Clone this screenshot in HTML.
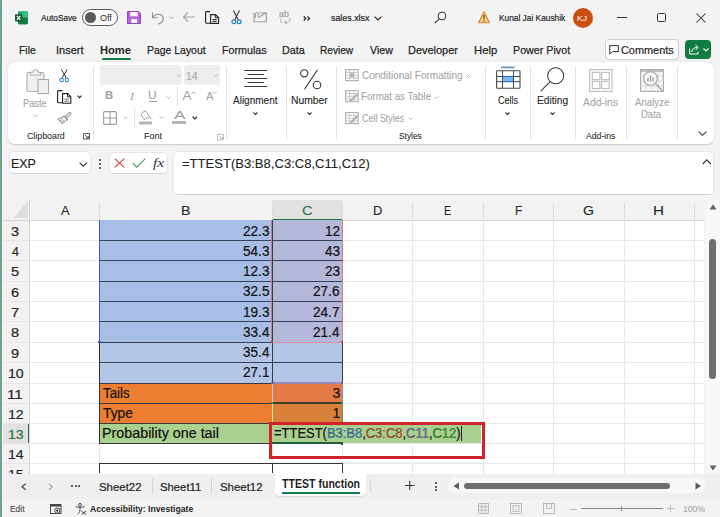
<!DOCTYPE html><html><head><meta charset='utf-8'><style>html,body{margin:0;padding:0;}body{width:720px;height:517px;position:relative;overflow:hidden;background:#f3f3f3;font-family:"Liberation Sans",sans-serif;}svg{overflow:visible}</style></head><body>
<div style='position:absolute;left:0px;top:0px;width:2px;height:517px;background:#6aa589;'></div>
<div style='position:absolute;left:1.5px;top:0px;width:0.8px;height:517px;background:#3f7f5f;'></div>
<div style='position:absolute;left:2.3px;top:0px;width:1px;height:517px;background:#fbfbfb;'></div>
<svg style='position:absolute;left:15px;top:10.8px;' width='13' height='13.5' viewBox='0 0 13 13.5'>
<rect x='3' y='0.3' width='9.8' height='12.9' rx='1.1' fill='#21a366'/>
<rect x='7.5' y='0.3' width='5.3' height='6.5' rx='0.8' fill='#33c481'/>
<rect x='3' y='6.6' width='9.8' height='6.6' rx='0.8' fill='#107c41'/>
<rect x='0' y='3.2' width='7.3' height='7.3' rx='0.9' fill='#185c37'/>
<path d='M1.9 4.9 L5.4 8.8 M5.4 4.9 L1.9 8.8' stroke='#fff' stroke-width='1.2'/>
</svg>
<div style='position:absolute;left:41.00px;top:13.8px;white-space:pre;font-family:"Liberation Sans",sans-serif;font-size:9px;font-weight:400;font-style:normal;line-height:1;color:#262626;transform:scaleX(0.9128);transform-origin:0 0;-webkit-text-stroke:0.2px #262626;'>AutoSave</div>
<div style='position:absolute;left:82px;top:9px;width:34px;height:15px;border:1px solid #5a5a5a;border-radius:9px;background:#fbfbfb'></div>
<div style='position:absolute;left:85px;top:12px;width:11px;height:11px;border-radius:50%;background:#5b5b5b'></div>
<div style='position:absolute;left:100.00px;top:14px;white-space:pre;font-family:"Liberation Sans",sans-serif;font-size:9px;font-weight:400;font-style:normal;line-height:1;color:#333;'>Off</div>
<svg style='position:absolute;left:127.2px;top:10.8px;' width='14' height='13' viewBox='0 0 14 13'>
<path d='M0 1 A1 1 0 0 1 1 0 H11.5 L13.9 2.4 V12 A1 1 0 0 1 12.9 13 H1 A1 1 0 0 1 0 12 Z' fill='#b563d8'/>
<rect x='3.2' y='0.9' width='7.6' height='4.4' fill='#fbf5fd'/>
<rect x='4.2' y='8.1' width='6' height='3.9' fill='#fbf5fd'/>
<path d='M0.5 1 V12.5 H13.4 V2.6 L11.3 0.5 H1 Z' fill='none' stroke='#9440b8' stroke-width='0.9'/>
</svg>
<svg style='position:absolute;left:151px;top:11px;' width='14' height='14' viewBox='0 0 14 14'>
<path d='M2 6.5 C4 2 11.5 2 12.3 7 C12.8 10 10 12.5 7 13.3' fill='none' stroke='#8c8c8c' stroke-width='1.1'/>
<path d='M1.5 1.5 V6.8 H6.5' fill='none' stroke='#8c8c8c' stroke-width='1.1'/>
</svg>
<svg style='position:absolute;left:169px;top:16px;' width='5' height='4' viewBox='0 0 5 4'><path d='M0.5 0.8 L2.5 2.8 L4.5 0.8' fill='none' stroke='#9a9a9a' stroke-width='0.9'/></svg>
<svg style='position:absolute;left:182px;top:11px;' width='14' height='12' viewBox='0 0 14 12'><path d='M13 6 H1.5 M6 1.5 L1.5 6 L6 10.5' fill='none' stroke='#a8a8a8' stroke-width='1.1'/></svg>
<svg style='position:absolute;left:205px;top:11px;' width='15' height='13' viewBox='0 0 15 13'>
<path d='M5.5 12.3 H1.5 A1 1 0 0 1 0.6 11.3 V1.6 A1 1 0 0 1 1.6 0.6 H5' fill='none' stroke='#222' stroke-width='1.1'/>
<path d='M5.6 3.6 H10.5 L13.6 6.6 V12.4 H5.6 Z' fill='none' stroke='#222' stroke-width='1.1'/>
<path d='M10.3 3.6 V6.8 H13.6 M7.5 8.6 H11.6 M7.5 10.4 H11.6' fill='none' stroke='#222' stroke-width='1'/>
</svg>
<svg style='position:absolute;left:231px;top:10px;' width='11' height='15' viewBox='0 0 11 15'>
<path d='M2.5 0.5 L7.3 10 M8.5 0.5 L3.7 10' stroke='#333' stroke-width='1.1' fill='none'/>
<circle cx='2.8' cy='11.8' r='1.9' fill='none' stroke='#2e7fc2' stroke-width='1.2'/>
<circle cx='8.2' cy='11.8' r='1.9' fill='none' stroke='#2e7fc2' stroke-width='1.2'/>
</svg>
<svg style='position:absolute;left:252.5px;top:10.5px;' width='15' height='12' viewBox='0 0 15 12'>
<path d='M1 1.5 V10.8 H13.3 V2 H6' fill='none' stroke='#9a9a9a' stroke-width='1.1'/>
<path d='M2.5 7 V2.2 A1.5 1.5 0 0 1 5.2 2.2 V6.3' fill='none' stroke='#9a9a9a' stroke-width='1'/>
<path d='M5.5 6.5 L13 1.8' stroke='#9a9a9a' stroke-width='1.1'/>
</svg>
<div style='position:absolute;left:279.00px;top:10px;white-space:pre;font-family:"Liberation Sans",sans-serif;font-size:8.5px;font-weight:400;font-style:normal;line-height:1;color:#a0a0a0;transform:scaleX(1.0333);transform-origin:0 0;-webkit-text-stroke:0.2px #a0a0a0;'>ab</div>
<svg style='position:absolute;left:278.5px;top:17px;' width='12' height='7' viewBox='0 0 12 7'><path d='M3.2 1 C1 1.5 1 5 3.2 5.8 M11 1 C11 4.5 8.5 6 6 5.5 M6.5 3.5 L5.5 5.5 L7.8 6.5' fill='none' stroke='#a8a8a8' stroke-width='1'/></svg>
<svg style='position:absolute;left:303px;top:16px;' width='8' height='5' viewBox='0 0 8 5'><path d='M0.7 0.5 L2.8 2.5 L0.7 4.5 M4.5 0.5 L6.6 2.5 L4.5 4.5' fill='none' stroke='#222' stroke-width='1.2'/></svg>
<div style='position:absolute;left:331.20px;top:13.2px;white-space:pre;font-family:"Liberation Sans",sans-serif;font-size:9.5px;font-weight:400;font-style:normal;line-height:1;color:#262626;transform:scaleX(0.9341);transform-origin:0 0;-webkit-text-stroke:0.2px #262626;'>sales.xlsx</div>
<svg style='position:absolute;left:373.5px;top:15.5px;' width='8' height='5' viewBox='0 0 8 5'><path d='M0.6 0.6 L4 4 L7.4 0.6' fill='none' stroke='#222' stroke-width='1.1'/></svg>
<svg style='position:absolute;left:434px;top:10.5px;' width='13' height='13' viewBox='0 0 13 13'><circle cx='8' cy='5' r='3.9' fill='none' stroke='#333' stroke-width='1'/><path d='M5.2 7.8 L0.9 12.2' stroke='#333' stroke-width='1.1'/></svg>
<svg style='position:absolute;left:477.5px;top:11px;' width='12' height='12.5' viewBox='0 0 12 12.5'><path d='M6 0.8 L11.4 11.8 H0.6 Z' fill='#f8cd85' stroke='#d4882e' stroke-width='1.1' stroke-linejoin='round'/><path d='M6 4 V8.3' stroke='#4a3000' stroke-width='1.1'/><circle cx='6' cy='10' r='0.65' fill='#4a3000'/></svg>
<div style='position:absolute;left:498.67px;top:13.8px;white-space:pre;font-family:"Liberation Sans",sans-serif;font-size:9px;font-weight:400;font-style:normal;line-height:1;color:#262626;transform:scaleX(0.9257);transform-origin:0 0;-webkit-text-stroke:0.2px #262626;'>Kunal Jai Kaushik</div>
<div style='position:absolute;left:572.5px;top:7.5px;width:20.5px;height:20.5px;border-radius:50%;background:#ca5010'></div>
<div style='position:absolute;left:576.94px;top:14.8px;white-space:pre;font-family:"Liberation Sans",sans-serif;font-size:8px;font-weight:400;font-style:normal;line-height:1;color:#fff;transform:scaleX(1.0625);transform-origin:0 0;'>KJ</div>
<div style='position:absolute;left:617px;top:17px;width:10px;height:1px;background:#333;'></div>
<div style='position:absolute;left:656.5px;top:12.5px;width:7.5px;height:7.5px;border:1px solid #333;border-radius:1.5px'></div>
<svg style='position:absolute;left:695.5px;top:12.5px;' width='10' height='10' viewBox='0 0 10 10'><path d='M0.5 0.5 L9.5 9.5 M9.5 0.5 L0.5 9.5' stroke='#333' stroke-width='1.05'/></svg>
<div style='position:absolute;left:18.62px;top:45.2px;white-space:pre;font-family:"Liberation Sans",sans-serif;font-size:11.8px;font-weight:400;font-style:normal;line-height:1;color:#262626;transform:scaleX(0.8833);transform-origin:0 0;-webkit-text-stroke:0.25px #262626;'>File</div>
<div style='position:absolute;left:56.07px;top:45.2px;white-space:pre;font-family:"Liberation Sans",sans-serif;font-size:11.8px;font-weight:400;font-style:normal;line-height:1;color:#262626;transform:scaleX(0.9310);transform-origin:0 0;-webkit-text-stroke:0.25px #262626;'>Insert</div>
<div style='position:absolute;left:146.62px;top:45.2px;white-space:pre;font-family:"Liberation Sans",sans-serif;font-size:11.8px;font-weight:400;font-style:normal;line-height:1;color:#262626;transform:scaleX(0.8846);transform-origin:0 0;-webkit-text-stroke:0.25px #262626;'>Page Layout</div>
<div style='position:absolute;left:221.59px;top:45.2px;white-space:pre;font-family:"Liberation Sans",sans-serif;font-size:11.8px;font-weight:400;font-style:normal;line-height:1;color:#262626;transform:scaleX(0.9062);transform-origin:0 0;-webkit-text-stroke:0.25px #262626;'>Formulas</div>
<div style='position:absolute;left:281.58px;top:45.2px;white-space:pre;font-family:"Liberation Sans",sans-serif;font-size:11.8px;font-weight:400;font-style:normal;line-height:1;color:#262626;transform:scaleX(0.9167);transform-origin:0 0;-webkit-text-stroke:0.25px #262626;'>Data</div>
<div style='position:absolute;left:319.64px;top:45.2px;white-space:pre;font-family:"Liberation Sans",sans-serif;font-size:11.8px;font-weight:400;font-style:normal;line-height:1;color:#262626;transform:scaleX(0.8553);transform-origin:0 0;-webkit-text-stroke:0.25px #262626;'>Review</div>
<div style='position:absolute;left:369.50px;top:45.2px;white-space:pre;font-family:"Liberation Sans",sans-serif;font-size:11.8px;font-weight:400;font-style:normal;line-height:1;color:#262626;transform:scaleX(0.9000);transform-origin:0 0;-webkit-text-stroke:0.25px #262626;'>View</div>
<div style='position:absolute;left:407.82px;top:45.2px;white-space:pre;font-family:"Liberation Sans",sans-serif;font-size:11.8px;font-weight:400;font-style:normal;line-height:1;color:#262626;transform:scaleX(0.9292);transform-origin:0 0;-webkit-text-stroke:0.25px #262626;'>Developer</div>
<div style='position:absolute;left:474.04px;top:45.2px;white-space:pre;font-family:"Liberation Sans",sans-serif;font-size:11.8px;font-weight:400;font-style:normal;line-height:1;color:#262626;transform:scaleX(0.9565);transform-origin:0 0;-webkit-text-stroke:0.25px #262626;'>Help</div>
<div style='position:absolute;left:512.84px;top:45.2px;white-space:pre;font-family:"Liberation Sans",sans-serif;font-size:11.8px;font-weight:400;font-style:normal;line-height:1;color:#262626;transform:scaleX(0.9073);transform-origin:0 0;-webkit-text-stroke:0.25px #262626;'>Power Pivot</div>
<div style='position:absolute;left:99.55px;top:45.2px;white-space:pre;font-family:"Liberation Sans",sans-serif;font-size:11.8px;font-weight:700;font-style:normal;line-height:1;color:#262626;transform:scaleX(0.9453);transform-origin:0 0;'>Home</div>
<div style='position:absolute;left:101.5px;top:57.5px;width:29.5px;height:2px;border-radius:1px;background:#117a43'></div>
<div style='position:absolute;left:604.5px;top:39px;width:72px;height:18.5px;border:1px solid #cdcdcd;border-radius:4px;background:#fdfdfd'></div>
<svg style='position:absolute;left:608.5px;top:44.5px;' width='10' height='9.5' viewBox='0 0 10 9.5'><path d='M0.6 0.6 H9.4 V6.6 H3.6 L0.8 9 V0.6 Z' fill='none' stroke='#333' stroke-width='1'/></svg>
<div style='position:absolute;left:620.81px;top:44.9px;white-space:pre;font-family:"Liberation Sans",sans-serif;font-size:11px;font-weight:400;font-style:normal;line-height:1;color:#262626;transform:scaleX(0.9904);transform-origin:0 0;-webkit-text-stroke:0.2px #262626;'>Comments</div>
<div style='position:absolute;left:685px;top:39.5px;width:25.5px;height:19.5px;border-radius:4px;background:#107c41'></div>
<svg style='position:absolute;left:688.5px;top:43.5px;' width='11' height='11' viewBox='0 0 11 11'><path d='M0.7 4.5 V10 H9 V7.5' fill='none' stroke='#fff' stroke-width='1'/><path d='M2.8 8 C3 5 5 3.5 8 3.5 M6.5 1 L9.3 3.5 L6.5 6' fill='none' stroke='#fff' stroke-width='1'/></svg>
<svg style='position:absolute;left:702.5px;top:48px;' width='6' height='4' viewBox='0 0 6 4'><path d='M0.5 0.5 L3 3 L5.5 0.5' fill='none' stroke='#fff' stroke-width='1.1'/></svg>
<div style='position:absolute;left:8px;top:62px;width:705.5px;height:82px;background:#fff;border-radius:7px;box-shadow:0 0.5px 1.5px rgba(0,0,0,0.18)'></div>
<div style='position:absolute;left:92.8px;top:66px;width:1px;height:73px;background:#e3e3e3;'></div>
<div style='position:absolute;left:226.3px;top:66px;width:1px;height:73px;background:#e3e3e3;'></div>
<div style='position:absolute;left:285.5px;top:66px;width:1px;height:73px;background:#e3e3e3;'></div>
<div style='position:absolute;left:335.5px;top:66px;width:1px;height:73px;background:#e3e3e3;'></div>
<div style='position:absolute;left:485.3px;top:66px;width:1px;height:73px;background:#e3e3e3;'></div>
<div style='position:absolute;left:530.4px;top:66px;width:1px;height:73px;background:#e3e3e3;'></div>
<div style='position:absolute;left:574.8px;top:66px;width:1px;height:73px;background:#e3e3e3;'></div>
<div style='position:absolute;left:626px;top:66px;width:1px;height:73px;background:#e3e3e3;'></div>
<div style='position:absolute;left:677px;top:66px;width:1px;height:73px;background:#e3e3e3;'></div>
<svg style='position:absolute;left:25.5px;top:69px;' width='24' height='26' viewBox='0 0 24 26'>
<rect x='1' y='3.5' width='17' height='19' rx='1.2' fill='#f0f0f0' stroke='#b0b0b0' stroke-width='1.1'/>
<path d='M4.5 6 V3.3 H7 A2.5 2.5 0 0 1 12 3.3 H14.5 V6 Z' fill='#f5f5f5' stroke='#b0b0b0' stroke-width='1.1'/>
<rect x='12' y='10.5' width='10.5' height='14' fill='#f0f0f0' stroke='#a8a8a8' stroke-width='1.1'/>
</svg>
<div style='position:absolute;left:23.07px;top:98.7px;white-space:pre;font-family:"Liberation Sans",sans-serif;font-size:10px;font-weight:400;font-style:normal;line-height:1;color:#a6a6a6;transform:scaleX(0.9292);transform-origin:0 0;-webkit-text-stroke:0.1px #a6a6a6;'>Paste</div>
<svg style='position:absolute;left:33px;top:114px;' width='5' height='4' viewBox='0 0 5 4'><path d='M0.5 0.8 L2.5 2.8 L4.5 0.8' fill='none' stroke='#a8a8a8' stroke-width='0.9'/></svg>
<svg style='position:absolute;left:58.5px;top:68.5px;' width='10.5' height='13.5' viewBox='0 0 10.5 13.5'>
<path d='M2.3 0.3 L7.2 8.8 M8.2 0.3 L3.3 8.8' stroke='#333' stroke-width='1' fill='none'/>
<circle cx='2.6' cy='10.9' r='1.75' fill='none' stroke='#3a8bc8' stroke-width='1.1'/>
<circle cx='7.9' cy='10.9' r='1.75' fill='none' stroke='#3a8bc8' stroke-width='1.1'/>
</svg>
<svg style='position:absolute;left:56.5px;top:89.5px;' width='15' height='14' viewBox='0 0 15 14'>
<path d='M5.5 12.8 H1.6 A1 1 0 0 1 0.6 11.8 V1.6 A1 1 0 0 1 1.6 0.6 H5.5' fill='none' stroke='#222' stroke-width='1.1'/>
<path d='M5.6 3.6 H10.7 L13.8 6.7 V13.2 H5.6 Z' fill='none' stroke='#222' stroke-width='1.1'/>
<path d='M10.5 3.6 V6.9 H13.8' fill='none' stroke='#222' stroke-width='1'/><path d='M7.6 9.2 H11.8 M7.6 11.3 H11.8' fill='none' stroke='#333' stroke-width='0.75'/>
</svg>
<svg style='position:absolute;left:76.5px;top:95px;' width='5' height='4' viewBox='0 0 5 4'><path d='M0.6 0.6 L2.5 2.6 L4.4 0.6' fill='none' stroke='#222' stroke-width='1.1'/></svg>
<svg style='position:absolute;left:57px;top:110.5px;' width='14' height='13' viewBox='0 0 14 13'>
<path d='M9.3 4.7 L12.3 1.4 A1.1 1.1 0 0 1 13.8 2.9 L10.6 6' fill='none' stroke='#9a9a9a' stroke-width='1.1'/>
<path d='M7.2 4.6 L11 8.4' stroke='#9a9a9a' stroke-width='1.8'/>
<path d='M7 5.2 L1 8.2 L5 12.5 L10.3 8.6 Z' fill='#f2f2f2' stroke='#9a9a9a' stroke-width='1.05' stroke-linejoin='round'/>
<path d='M3.2 9.8 L5.5 7.8 M4.6 11.2 L7 9' stroke='#9a9a9a' stroke-width='0.9'/>
</svg>
<div style='position:absolute;left:27.00px;top:131.6px;white-space:pre;font-family:"Liberation Sans",sans-serif;font-size:9px;font-weight:400;font-style:normal;line-height:1;color:#262626;transform:scaleX(0.9789);transform-origin:0 0;-webkit-text-stroke:0.05px #262626;'>Clipboard</div>
<svg style='position:absolute;left:83px;top:133px;' width='7' height='6.5' viewBox='0 0 7 6.5'><path d='M0.5 0.5 H6.5 V6 H0.5 Z' fill='none' stroke='#444' stroke-width='0.9'/><path d='M2 2 L5.3 5 M5.3 2.8 V5 H3' fill='none' stroke='#444' stroke-width='0.9'/></svg>
<div style='position:absolute;left:100.2px;top:65px;width:82.3px;height:19.5px;border-radius:3.5px;background:#ededed'></div>
<div style='position:absolute;left:184.4px;top:65px;width:35.4px;height:19.5px;border-radius:3.5px;background:#ededed'></div>
<svg style='position:absolute;left:175.5px;top:73.5px;' width='5' height='3' viewBox='0 0 5 3'><path d='M0.5 0.5 L2.5 2.5 L4.5 0.5' fill='none' stroke='#aaa' stroke-width='0.8'/></svg>
<svg style='position:absolute;left:212.5px;top:73.5px;' width='5' height='3' viewBox='0 0 5 3'><path d='M0.5 0.5 L2.5 2.5 L4.5 0.5' fill='none' stroke='#aaa' stroke-width='0.8'/></svg>
<div style='position:absolute;left:185.95px;top:71.5px;white-space:pre;font-family:"Liberation Sans",sans-serif;font-size:10px;font-weight:400;font-style:normal;line-height:1;color:#b0b0b0;transform:scaleX(1.0500);transform-origin:0 0;-webkit-text-stroke:0.2px #b0b0b0;'>14</div>
<div style='position:absolute;left:105.47px;top:91.4px;white-space:pre;font-family:"Liberation Sans",sans-serif;font-size:10px;font-weight:700;font-style:normal;line-height:1;color:#9d9d9d;transform:scaleX(1.1333);transform-origin:0 0;'>B</div>
<div style='position:absolute;left:129.50px;top:91.5px;white-space:pre;font-family:"Liberation Serif",serif;font-size:10.5px;font-weight:400;font-style:italic;line-height:1;color:#9d9d9d;transform:scaleX(1.1250);transform-origin:0 0;'>I</div>
<div style='position:absolute;left:147.60px;top:91px;white-space:pre;font-family:"Liberation Sans",sans-serif;font-size:10px;font-weight:400;font-style:normal;line-height:1;color:#9d9d9d;transform:scaleX(1.2000);transform-origin:0 0;'>U</div>
<div style='position:absolute;left:148.5px;top:100.8px;width:8px;height:1px;background:#9d9d9d;'></div>
<svg style='position:absolute;left:166px;top:95.5px;' width='5' height='3' viewBox='0 0 5 3'><path d='M0.5 0.5 L2.5 2.5 L4.5 0.5' fill='none' stroke='#aaa' stroke-width='0.8'/></svg>
<div style='position:absolute;left:176.7px;top:86.5px;width:1px;height:19px;background:#e0e0e0;'></div>
<div style='position:absolute;left:182.50px;top:89.3px;white-space:pre;font-family:"Liberation Sans",sans-serif;font-size:13.5px;font-weight:400;font-style:normal;line-height:1;color:#a0a0a0;'>A</div>
<svg style='position:absolute;left:191px;top:91px;' width='5' height='3.5' viewBox='0 0 5 3.5'><path d='M0.5 3 L2.5 0.8 L4.5 3' fill='none' stroke='#9d9d9d' stroke-width='0.8'/></svg>
<div style='position:absolute;left:205.50px;top:91.3px;white-space:pre;font-family:"Liberation Sans",sans-serif;font-size:10.5px;font-weight:400;font-style:normal;line-height:1;color:#a0a0a0;transform:scaleX(1.0714);transform-origin:0 0;'>A</div>
<svg style='position:absolute;left:212px;top:91px;' width='5' height='3.5' viewBox='0 0 5 3.5'><path d='M0.5 0.5 L2.5 2.7 L4.5 0.5' fill='none' stroke='#9d9d9d' stroke-width='0.8'/></svg>
<svg style='position:absolute;left:102.5px;top:110.5px;' width='14' height='14' viewBox='0 0 14 14'><rect x='0.6' y='0.6' width='12.8' height='12.8' rx='1' fill='none' stroke='#9d9d9d' stroke-width='1.1'/><path d='M7 0.6 V13.4 M0.6 7 H13.4' stroke='#9d9d9d' stroke-width='1.1'/></svg>
<svg style='position:absolute;left:123px;top:116px;' width='5' height='3' viewBox='0 0 5 3'><path d='M0.5 0.5 L2.5 2.5 L4.5 0.5' fill='none' stroke='#aaa' stroke-width='0.8'/></svg>
<div style='position:absolute;left:133.5px;top:108px;width:1px;height:20px;background:#e0e0e0;'></div>
<svg style='position:absolute;left:139px;top:110px;' width='13.5' height='15' viewBox='0 0 13.5 15'><path d='M3.5 2.5 L6.5 0.8 L10.5 6.5 L5.5 9.5 L2 5 Z' fill='none' stroke='#9d9d9d' stroke-width='1'/><path d='M11.5 6.5 C12.5 8 12.8 9 11.8 9.3 C10.8 9 11 8 11.5 6.5 Z' fill='#9d9d9d'/><rect x='0' y='11.5' width='13' height='3' fill='#b5b5b5'/></svg>
<svg style='position:absolute;left:159px;top:116px;' width='5' height='3' viewBox='0 0 5 3'><path d='M0.5 0.5 L2.5 2.5 L4.5 0.5' fill='none' stroke='#aaa' stroke-width='0.8'/></svg>
<div style='position:absolute;left:173.50px;top:110.4px;white-space:pre;font-family:"Liberation Sans",sans-serif;font-size:11px;font-weight:400;font-style:normal;line-height:1;color:#a0a0a0;transform:scaleX(1.5714);transform-origin:0 0;'>A</div>
<div style='position:absolute;left:172.4px;top:121px;width:13.6px;height:2.8px;background:#b5b5b5;'></div>
<svg style='position:absolute;left:192px;top:115.5px;' width='5.5' height='4' viewBox='0 0 5.5 4'><path d='M0.6 0.6 L2.75 2.8 L4.9 0.6' fill='none' stroke='#222' stroke-width='1.2'/></svg>
<div style='position:absolute;left:143.61px;top:131.8px;white-space:pre;font-family:"Liberation Sans",sans-serif;font-size:9px;font-weight:400;font-style:normal;line-height:1;color:#262626;transform:scaleX(0.9941);transform-origin:0 0;-webkit-text-stroke:0.05px #262626;'>Font</div>
<svg style='position:absolute;left:216.5px;top:133.5px;' width='7' height='6.5' viewBox='0 0 7 6.5'><path d='M0.5 0.5 H6.5 V6 H0.5 Z' fill='none' stroke='#b8b8b8' stroke-width='0.9'/><path d='M2 2 L5.3 5 M5.3 2.8 V5 H3' fill='none' stroke='#b8b8b8' stroke-width='0.9'/></svg>
<svg style='position:absolute;left:243.5px;top:69px;' width='24' height='18.5' viewBox='0 0 24 18.5'><path d='M0.3 1.5 H23 M3.5 5.5 H19.8 M0.3 9.5 H23 M3.5 13.5 H19.8 M0.3 17.5 H23' stroke='#3a3a3a' stroke-width='1'/></svg>
<div style='position:absolute;left:233.00px;top:95.7px;white-space:pre;font-family:"Liberation Sans",sans-serif;font-size:10px;font-weight:400;font-style:normal;line-height:1;color:#262626;-webkit-text-stroke:0.1px #262626;'>Alignment</div>
<svg style='position:absolute;left:253px;top:111.5px;' width='5' height='3.5' viewBox='0 0 5 3.5'><path d='M0.5 0.5 L2.5 2.5 L4.5 0.5' fill='none' stroke='#333' stroke-width='1.1'/></svg>
<svg style='position:absolute;left:299.5px;top:68.5px;' width='22' height='21' viewBox='0 0 22 21'><circle cx='4.3' cy='4.3' r='3.6' fill='none' stroke='#333' stroke-width='1.1'/><circle cx='17' cy='16' r='3.8' fill='none' stroke='#333' stroke-width='1.1'/><path d='M17.5 0.8 L4.5 20.3' stroke='#333' stroke-width='1.1'/></svg>
<div style='position:absolute;left:291.47px;top:95.7px;white-space:pre;font-family:"Liberation Sans",sans-serif;font-size:10px;font-weight:400;font-style:normal;line-height:1;color:#262626;transform:scaleX(1.0294);transform-origin:0 0;-webkit-text-stroke:0.1px #262626;'>Number</div>
<svg style='position:absolute;left:307px;top:111.5px;' width='5' height='3.5' viewBox='0 0 5 3.5'><path d='M0.5 0.5 L2.5 2.5 L4.5 0.5' fill='none' stroke='#333' stroke-width='1.1'/></svg>
<svg style='position:absolute;left:345px;top:68.5px;' width='14' height='12.5' viewBox='0 0 14 12.5'><rect x='0.6' y='0.6' width='12.6' height='11' fill='none' stroke='#b0b0b0' stroke-width='1.1'/><path d='M0.6 3.5 H13.2 M0.6 6.3 H13.2 M0.6 9 H13.2 M4.6 0.6 V11.6 M9 0.6 V11.6' stroke='#c4c4c4' stroke-width='0.9'/><rect x='5' y='4' width='4' height='4.5' fill='#b8b8b8'/></svg>
<svg style='position:absolute;left:345px;top:89.8px;' width='14' height='12.5' viewBox='0 0 14 12.5'><rect x='0.6' y='0.6' width='12.6' height='11' fill='none' stroke='#b0b0b0' stroke-width='1.1'/><path d='M0.6 3.5 H13.2 M0.6 6.3 H13.2 M0.6 9 H13.2 M4.6 0.6 V11.6 M9 0.6 V11.6' stroke='#c4c4c4' stroke-width='0.9'/><path d='M5 11.5 L12.5 4' stroke='#b0b0b0' stroke-width='2'/></svg>
<svg style='position:absolute;left:345px;top:111.5px;' width='14' height='12.5' viewBox='0 0 14 12.5'><rect x='0.6' y='0.6' width='12.6' height='11' fill='none' stroke='#b0b0b0' stroke-width='1.1'/><path d='M0.6 3.5 H13.2 M0.6 6.3 H13.2 M0.6 9 H13.2 M4.6 0.6 V11.6 M9 0.6 V11.6' stroke='#c4c4c4' stroke-width='0.9'/><path d='M5 11.5 L12.5 4' stroke='#b0b0b0' stroke-width='2'/></svg>
<div style='position:absolute;left:362.00px;top:71px;white-space:pre;font-family:"Liberation Sans",sans-serif;font-size:10px;font-weight:400;font-style:normal;line-height:1;color:#a6a6a6;-webkit-text-stroke:0.1px #a6a6a6;'>Conditional Formatting</div>
<svg style='position:absolute;left:466px;top:74.5px;' width='5' height='3' viewBox='0 0 5 3'><path d='M0.5 0.5 L2.5 2.5 L4.5 0.5' fill='none' stroke='#aaa' stroke-width='0.9'/></svg>
<div style='position:absolute;left:361.02px;top:92px;white-space:pre;font-family:"Liberation Sans",sans-serif;font-size:10px;font-weight:400;font-style:normal;line-height:1;color:#a6a6a6;transform:scaleX(0.9771);transform-origin:0 0;-webkit-text-stroke:0.1px #a6a6a6;'>Format as Table</div>
<svg style='position:absolute;left:433.5px;top:95.5px;' width='5' height='3' viewBox='0 0 5 3'><path d='M0.5 0.5 L2.5 2.5 L4.5 0.5' fill='none' stroke='#aaa' stroke-width='0.9'/></svg>
<div style='position:absolute;left:362.00px;top:113.5px;white-space:pre;font-family:"Liberation Sans",sans-serif;font-size:10px;font-weight:400;font-style:normal;line-height:1;color:#a6a6a6;transform:scaleX(0.8936);transform-origin:0 0;-webkit-text-stroke:0.1px #a6a6a6;'>Cell Styles</div>
<svg style='position:absolute;left:407.5px;top:117px;' width='5' height='3' viewBox='0 0 5 3'><path d='M0.5 0.5 L2.5 2.5 L4.5 0.5' fill='none' stroke='#aaa' stroke-width='0.9'/></svg>
<div style='position:absolute;left:398.67px;top:132px;white-space:pre;font-family:"Liberation Sans",sans-serif;font-size:9px;font-weight:400;font-style:normal;line-height:1;color:#262626;transform:scaleX(0.9304);transform-origin:0 0;-webkit-text-stroke:0.05px #262626;'>Styles</div>
<svg style='position:absolute;left:496px;top:65.5px;' width='25' height='23' viewBox='0 0 25 23'>
<path d='M5 1.4 H18.7' stroke='#6a9ec0' stroke-width='1.8'/>
<rect x='0.6' y='4.8' width='23.4' height='17.4' rx='0.8' fill='#fff' stroke='#4a4a4a' stroke-width='1.1'/>
<rect x='6.5' y='10.5' width='11' height='5.2' fill='#7db8f0' stroke='#1a6fc0' stroke-width='1.1'/>
<path d='M0.6 10.5 H6.5 M17.5 10.5 H24 M0.6 15.7 H6.5 M17.5 15.7 H24 M6.5 4.8 V22.2 M17.5 4.8 V22.2' stroke='#4a4a4a' stroke-width='1'/>
</svg>
<div style='position:absolute;left:498.00px;top:95.7px;white-space:pre;font-family:"Liberation Sans",sans-serif;font-size:10px;font-weight:400;font-style:normal;line-height:1;color:#262626;transform:scaleX(0.9000);transform-origin:0 0;-webkit-text-stroke:0.1px #262626;'>Cells</div>
<svg style='position:absolute;left:505px;top:111.5px;' width='5' height='3.5' viewBox='0 0 5 3.5'><path d='M0.5 0.5 L2.5 2.5 L4.5 0.5' fill='none' stroke='#333' stroke-width='1.1'/></svg>
<svg style='position:absolute;left:539.5px;top:67px;' width='26' height='25' viewBox='0 0 26 25'><circle cx='15.7' cy='8.8' r='8' fill='none' stroke='#3a3a3a' stroke-width='1.05'/><path d='M10 14.6 L0.8 24.2' stroke='#3a3a3a' stroke-width='1.1'/></svg>
<div style='position:absolute;left:536.58px;top:95.7px;white-space:pre;font-family:"Liberation Sans",sans-serif;font-size:10px;font-weight:400;font-style:normal;line-height:1;color:#262626;transform:scaleX(1.0207);transform-origin:0 0;-webkit-text-stroke:0.1px #262626;'>Editing</div>
<svg style='position:absolute;left:550px;top:111.5px;' width='5' height='3.5' viewBox='0 0 5 3.5'><path d='M0.5 0.5 L2.5 2.5 L4.5 0.5' fill='none' stroke='#333' stroke-width='1.1'/></svg>
<svg style='position:absolute;left:589px;top:69px;' width='23.5' height='23' viewBox='0 0 23.5 23'>
<rect x='0.6' y='0.6' width='22.3' height='21.8' fill='none' stroke='#bdbdbd' stroke-width='1.1'/>
<rect x='3.3' y='3.3' width='7.6' height='7.4' fill='none' stroke='#bdbdbd' stroke-width='1.1'/>
<rect x='12.6' y='3.3' width='7.6' height='7.4' fill='none' stroke='#bdbdbd' stroke-width='1.1'/>
<rect x='3.3' y='12.3' width='7.6' height='7.4' fill='none' stroke='#bdbdbd' stroke-width='1.1'/>
<rect x='12.6' y='12.3' width='7.6' height='7.4' fill='none' stroke='#bdbdbd' stroke-width='1.1'/>
</svg>
<div style='position:absolute;left:582.70px;top:97.6px;white-space:pre;font-family:"Liberation Sans",sans-serif;font-size:10px;font-weight:400;font-style:normal;line-height:1;color:#a6a6a6;transform:scaleX(1.0324);transform-origin:0 0;-webkit-text-stroke:0.1px #a6a6a6;'>Add-ins</div>
<div style='position:absolute;left:585.60px;top:132px;white-space:pre;font-family:"Liberation Sans",sans-serif;font-size:9px;font-weight:400;font-style:normal;line-height:1;color:#262626;transform:scaleX(0.9633);transform-origin:0 0;-webkit-text-stroke:0.05px #262626;'>Add-ins</div>
<svg style='position:absolute;left:640px;top:69px;' width='24' height='23' viewBox='0 0 24 23'>
<rect x='0.6' y='0.6' width='22.8' height='21.8' fill='#f6f6f6' stroke='#a8a8a8' stroke-width='1.1'/>
<rect x='0.6' y='0.6' width='22.8' height='2.2' fill='#b8b8b8'/>
<path d='M0.6 7 H23.4 M0.6 12 H23.4 M0.6 17 H23.4 M6 2.8 V22.4 M12 2.8 V22.4 M18 2.8 V22.4' stroke='#d6d6d6' stroke-width='0.8'/>
<circle cx='10.5' cy='9.5' r='6.8' fill='#fbfbfb' stroke='#a0a0a0' stroke-width='1.1'/>
<path d='M8 12.5 V9 M10.5 12.5 V6.5 M13 12.5 V8.5' stroke='#a0a0a0' stroke-width='1.4'/>
<path d='M15.5 14.5 L22.5 21.8' stroke='#a0a0a0' stroke-width='1.3'/>
</svg>
<div style='position:absolute;left:635.00px;top:97.6px;white-space:pre;font-family:"Liberation Sans",sans-serif;font-size:10px;font-weight:400;font-style:normal;line-height:1;color:#a6a6a6;transform:scaleX(0.9629);transform-origin:0 0;-webkit-text-stroke:0.1px #a6a6a6;'>Analyze</div>
<div style='position:absolute;left:641.05px;top:110.2px;white-space:pre;font-family:"Liberation Sans",sans-serif;font-size:10px;font-weight:400;font-style:normal;line-height:1;color:#a6a6a6;transform:scaleX(0.9500);transform-origin:0 0;-webkit-text-stroke:0.1px #a6a6a6;'>Data</div>
<svg style='position:absolute;left:698px;top:131px;' width='9' height='5' viewBox='0 0 9 5'><path d='M0.6 0.6 L4.5 4.3 L8.4 0.6' fill='none' stroke='#333' stroke-width='1.1'/></svg>
<div style='position:absolute;left:8.8px;top:151.4px;width:82.5px;height:23px;box-sizing:border-box;border:1px solid #e6e6e6;border-bottom-color:#d2d2d2;border-radius:5px;background:#fff'></div>
<div style='position:absolute;left:11.45px;top:157px;white-space:pre;font-family:"Liberation Sans",sans-serif;font-size:13px;font-weight:400;font-style:normal;line-height:1;color:#1f1f1f;transform:scaleX(0.9542);transform-origin:0 0;-webkit-text-stroke:0.2px #1f1f1f;'>EXP</div>
<svg style='position:absolute;left:79px;top:162px;' width='8.5' height='5' viewBox='0 0 8.5 5'><path d='M0.6 0.6 L4.25 4.2 L7.9 0.6' fill='none' stroke='#333' stroke-width='1.1'/></svg>
<div style='position:absolute;left:98.9px;top:158.5px;width:2.2px;height:2.2px;border-radius:50%;background:#333'></div>
<div style='position:absolute;left:98.9px;top:162.5px;width:2.2px;height:2.2px;border-radius:50%;background:#333'></div>
<div style='position:absolute;left:98.9px;top:166.5px;width:2.2px;height:2.2px;border-radius:50%;background:#333'></div>
<div style='position:absolute;left:108.8px;top:151.5px;width:59.5px;height:22.8px;box-sizing:border-box;border:1px solid #e6e6e6;border-bottom-color:#d2d2d2;border-radius:5px;background:#fff'></div>
<svg style='position:absolute;left:113.5px;top:157.5px;' width='11' height='10' viewBox='0 0 11 10'><path d='M0.7 0.7 L10.3 9.3 M10.3 0.7 L0.7 9.3' stroke='#cf3a3e' stroke-width='1.05'/></svg>
<svg style='position:absolute;left:131.5px;top:157.5px;' width='14' height='10' viewBox='0 0 14 10'><path d='M0.7 5.2 L4.8 9.2 L13.3 0.7' fill='none' stroke='#3a9a5e' stroke-width='1.05'/></svg>
<div style='position:absolute;left:152.80px;top:157px;white-space:pre;font-family:"Liberation Serif",serif;font-size:12.5px;font-weight:400;font-style:italic;line-height:1;color:#333;transform:scaleX(1.2333);transform-origin:0 0;'><i>f</i>x</div>
<div style='position:absolute;left:172.8px;top:151.4px;width:541.2px;height:43.4px;box-sizing:border-box;border:1px solid #e6e6e6;border-bottom-color:#d2d2d2;border-radius:5px;background:#fff'></div>
<div style='position:absolute;left:182.18px;top:158px;white-space:pre;font-family:"Liberation Sans",sans-serif;font-size:12.8px;font-weight:400;font-style:normal;line-height:1;color:#1f1f1f;transform:scaleX(1.0197);transform-origin:0 0;-webkit-text-stroke:0.1px #1f1f1f;'>=TTEST(B3:B8,C3:C8,C11,C12)</div>
<svg style='position:absolute;left:701.5px;top:158.5px;' width='9.5' height='5.5' viewBox='0 0 9.5 5.5'><path d='M0.7 5 L4.75 0.9 L8.8 5' fill='none' stroke='#333' stroke-width='1.1'/></svg>
<div style='position:absolute;left:3px;top:200px;width:701px;height:20px;background:#f2f2f2;'></div>
<div style='position:absolute;left:3px;top:220px;width:26px;height:253.5px;background:#f2f2f2;'></div>
<div style='position:absolute;left:29px;top:220px;width:675px;height:253.5px;background:#ffffff;'></div>
<svg style='position:absolute;left:12.5px;top:200.5px;' width='15.5' height='17.5' viewBox='0 0 15.5 17.5'><path d='M15 0 V17 H0 Z' fill='#dedede'/></svg>
<div style='position:absolute;left:29px;top:200px;width:1px;height:273.5px;background:#d4d4d4;'></div>
<div style='position:absolute;left:3px;top:220px;width:701px;height:1px;background:#d4d4d4;'></div>
<div style='position:absolute;left:272px;top:200px;width:70px;height:20px;background:#e1e1e1;'></div>
<div style='position:absolute;left:272px;top:218.5px;width:70px;height:1.8px;background:#217346;'></div>
<div style='position:absolute;left:3px;top:423px;width:26px;height:20px;background:#e1e1e1;'></div>
<div style='position:absolute;left:27.5px;top:423px;width:1.8px;height:20px;background:#217346;'></div>
<div style='position:absolute;left:99px;top:203px;width:1px;height:17px;background:#dcdcdc;'></div>
<div style='position:absolute;left:272px;top:203px;width:1px;height:17px;background:#dcdcdc;'></div>
<div style='position:absolute;left:342px;top:203px;width:1px;height:17px;background:#dcdcdc;'></div>
<div style='position:absolute;left:412px;top:203px;width:1px;height:17px;background:#dcdcdc;'></div>
<div style='position:absolute;left:483px;top:203px;width:1px;height:17px;background:#dcdcdc;'></div>
<div style='position:absolute;left:553px;top:203px;width:1px;height:17px;background:#dcdcdc;'></div>
<div style='position:absolute;left:624px;top:203px;width:1px;height:17px;background:#dcdcdc;'></div>
<div style='position:absolute;left:694px;top:203px;width:1px;height:17px;background:#dcdcdc;'></div>
<div style='position:absolute;left:99px;top:220px;width:1px;height:253.5px;background:#e9e9e9;'></div>
<div style='position:absolute;left:272px;top:220px;width:1px;height:253.5px;background:#e9e9e9;'></div>
<div style='position:absolute;left:342px;top:220px;width:1px;height:253.5px;background:#e9e9e9;'></div>
<div style='position:absolute;left:412px;top:220px;width:1px;height:253.5px;background:#e9e9e9;'></div>
<div style='position:absolute;left:483px;top:220px;width:1px;height:253.5px;background:#e9e9e9;'></div>
<div style='position:absolute;left:553px;top:220px;width:1px;height:253.5px;background:#e9e9e9;'></div>
<div style='position:absolute;left:624px;top:220px;width:1px;height:253.5px;background:#e9e9e9;'></div>
<div style='position:absolute;left:694px;top:220px;width:1px;height:253.5px;background:#e9e9e9;'></div>
<div style='position:absolute;left:29px;top:240px;width:675px;height:1px;background:#e9e9e9;'></div>
<div style='position:absolute;left:29px;top:260px;width:675px;height:1px;background:#e9e9e9;'></div>
<div style='position:absolute;left:29px;top:281px;width:675px;height:1px;background:#e9e9e9;'></div>
<div style='position:absolute;left:29px;top:301px;width:675px;height:1px;background:#e9e9e9;'></div>
<div style='position:absolute;left:29px;top:321px;width:675px;height:1px;background:#e9e9e9;'></div>
<div style='position:absolute;left:29px;top:342px;width:675px;height:1px;background:#e9e9e9;'></div>
<div style='position:absolute;left:29px;top:362px;width:675px;height:1px;background:#e9e9e9;'></div>
<div style='position:absolute;left:29px;top:383px;width:675px;height:1px;background:#e9e9e9;'></div>
<div style='position:absolute;left:29px;top:403px;width:675px;height:1px;background:#e9e9e9;'></div>
<div style='position:absolute;left:29px;top:423px;width:675px;height:1px;background:#e9e9e9;'></div>
<div style='position:absolute;left:29px;top:443px;width:675px;height:1px;background:#e9e9e9;'></div>
<div style='position:absolute;left:29px;top:463px;width:675px;height:1px;background:#e9e9e9;'></div>
<div style='position:absolute;left:3px;top:240px;width:26px;height:1px;background:#e6e6e6;'></div>
<div style='position:absolute;left:3px;top:260px;width:26px;height:1px;background:#e6e6e6;'></div>
<div style='position:absolute;left:3px;top:281px;width:26px;height:1px;background:#e6e6e6;'></div>
<div style='position:absolute;left:3px;top:301px;width:26px;height:1px;background:#e6e6e6;'></div>
<div style='position:absolute;left:3px;top:321px;width:26px;height:1px;background:#e6e6e6;'></div>
<div style='position:absolute;left:3px;top:342px;width:26px;height:1px;background:#e6e6e6;'></div>
<div style='position:absolute;left:3px;top:362px;width:26px;height:1px;background:#e6e6e6;'></div>
<div style='position:absolute;left:3px;top:383px;width:26px;height:1px;background:#e6e6e6;'></div>
<div style='position:absolute;left:3px;top:403px;width:26px;height:1px;background:#e6e6e6;'></div>
<div style='position:absolute;left:3px;top:423px;width:26px;height:1px;background:#e6e6e6;'></div>
<div style='position:absolute;left:3px;top:443px;width:26px;height:1px;background:#e6e6e6;'></div>
<div style='position:absolute;left:3px;top:463px;width:26px;height:1px;background:#e6e6e6;'></div>
<div style='position:absolute;left:60.90px;top:205.2px;white-space:pre;font-family:"Liberation Sans",sans-serif;font-size:12.5px;font-weight:400;font-style:normal;line-height:1;color:#262626;transform:scaleX(1.0250);transform-origin:0 0;-webkit-text-stroke:0.1px #262626;'>A</div>
<div style='position:absolute;left:181.16px;top:205.2px;white-space:pre;font-family:"Liberation Sans",sans-serif;font-size:12.5px;font-weight:400;font-style:normal;line-height:1;color:#262626;transform:scaleX(1.1429);transform-origin:0 0;-webkit-text-stroke:0.1px #262626;'>B</div>
<div style='position:absolute;left:301.83px;top:205.2px;white-space:pre;font-family:"Liberation Sans",sans-serif;font-size:12.5px;font-weight:400;font-style:normal;line-height:1;color:#217346;transform:scaleX(1.1714);transform-origin:0 0;-webkit-text-stroke:0.1px #217346;'>C</div>
<div style='position:absolute;left:372.72px;top:205.2px;white-space:pre;font-family:"Liberation Sans",sans-serif;font-size:12.5px;font-weight:400;font-style:normal;line-height:1;color:#262626;transform:scaleX(1.0312);transform-origin:0 0;-webkit-text-stroke:0.1px #262626;'>D</div>
<div style='position:absolute;left:444.14px;top:205.2px;white-space:pre;font-family:"Liberation Sans",sans-serif;font-size:12.5px;font-weight:400;font-style:normal;line-height:1;color:#262626;transform:scaleX(0.8571);transform-origin:0 0;-webkit-text-stroke:0.1px #262626;'>E</div>
<div style='position:absolute;left:514.55px;top:205.2px;white-space:pre;font-family:"Liberation Sans",sans-serif;font-size:12.5px;font-weight:400;font-style:normal;line-height:1;color:#262626;transform:scaleX(0.9500);transform-origin:0 0;-webkit-text-stroke:0.1px #262626;'>F</div>
<div style='position:absolute;left:582.88px;top:205.2px;white-space:pre;font-family:"Liberation Sans",sans-serif;font-size:12.5px;font-weight:400;font-style:normal;line-height:1;color:#262626;transform:scaleX(1.1250);transform-origin:0 0;-webkit-text-stroke:0.1px #262626;'>G</div>
<div style='position:absolute;left:653.29px;top:205.2px;white-space:pre;font-family:"Liberation Sans",sans-serif;font-size:12.5px;font-weight:400;font-style:normal;line-height:1;color:#262626;transform:scaleX(1.2143);transform-origin:0 0;-webkit-text-stroke:0.1px #262626;'>H</div>
<div style='position:absolute;left:11.20px;top:225px;white-space:pre;font-family:"Liberation Sans",sans-serif;font-size:13.2px;font-weight:400;font-style:normal;line-height:1;color:#262626;transform:scaleX(1.1000);transform-origin:0 0;-webkit-text-stroke:0.2px #262626;'>3</div>
<div style='position:absolute;left:12.30px;top:245px;white-space:pre;font-family:"Liberation Sans",sans-serif;font-size:13.2px;font-weight:400;font-style:normal;line-height:1;color:#262626;transform:scaleX(0.9429);transform-origin:0 0;-webkit-text-stroke:0.2px #262626;'>4</div>
<div style='position:absolute;left:11.20px;top:265px;white-space:pre;font-family:"Liberation Sans",sans-serif;font-size:13.2px;font-weight:400;font-style:normal;line-height:1;color:#262626;transform:scaleX(1.1000);transform-origin:0 0;-webkit-text-stroke:0.2px #262626;'>5</div>
<div style='position:absolute;left:11.20px;top:286px;white-space:pre;font-family:"Liberation Sans",sans-serif;font-size:13.2px;font-weight:400;font-style:normal;line-height:1;color:#262626;transform:scaleX(1.1000);transform-origin:0 0;-webkit-text-stroke:0.2px #262626;'>6</div>
<div style='position:absolute;left:11.20px;top:306px;white-space:pre;font-family:"Liberation Sans",sans-serif;font-size:13.2px;font-weight:400;font-style:normal;line-height:1;color:#262626;transform:scaleX(1.1000);transform-origin:0 0;-webkit-text-stroke:0.2px #262626;'>7</div>
<div style='position:absolute;left:11.20px;top:326px;white-space:pre;font-family:"Liberation Sans",sans-serif;font-size:13.2px;font-weight:400;font-style:normal;line-height:1;color:#262626;transform:scaleX(1.1000);transform-origin:0 0;-webkit-text-stroke:0.2px #262626;'>8</div>
<div style='position:absolute;left:11.20px;top:347px;white-space:pre;font-family:"Liberation Sans",sans-serif;font-size:13.2px;font-weight:400;font-style:normal;line-height:1;color:#262626;transform:scaleX(1.1000);transform-origin:0 0;-webkit-text-stroke:0.2px #262626;'>9</div>
<div style='position:absolute;left:7.58px;top:367px;white-space:pre;font-family:"Liberation Sans",sans-serif;font-size:13.2px;font-weight:400;font-style:normal;line-height:1;color:#262626;transform:scaleX(1.0692);transform-origin:0 0;-webkit-text-stroke:0.2px #262626;'>10</div>
<div style='position:absolute;left:7.49px;top:388px;white-space:pre;font-family:"Liberation Sans",sans-serif;font-size:13.2px;font-weight:400;font-style:normal;line-height:1;color:#262626;transform:scaleX(1.1583);transform-origin:0 0;-webkit-text-stroke:0.2px #262626;'>11</div>
<div style='position:absolute;left:7.58px;top:408px;white-space:pre;font-family:"Liberation Sans",sans-serif;font-size:13.2px;font-weight:400;font-style:normal;line-height:1;color:#262626;transform:scaleX(1.0692);transform-origin:0 0;-webkit-text-stroke:0.2px #262626;'>12</div>
<div style='position:absolute;left:7.58px;top:428px;white-space:pre;font-family:"Liberation Sans",sans-serif;font-size:13.2px;font-weight:400;font-style:normal;line-height:1;color:#217346;transform:scaleX(1.0692);transform-origin:0 0;-webkit-text-stroke:0.2px #217346;'>13</div>
<div style='position:absolute;left:7.58px;top:448px;white-space:pre;font-family:"Liberation Sans",sans-serif;font-size:13.2px;font-weight:400;font-style:normal;line-height:1;color:#262626;transform:scaleX(1.0692);transform-origin:0 0;-webkit-text-stroke:0.2px #262626;'>14</div>
<div style='position:absolute;left:7.58px;top:468px;white-space:pre;font-family:"Liberation Sans",sans-serif;font-size:13.2px;font-weight:400;font-style:normal;line-height:1;color:#262626;transform:scaleX(1.0692);transform-origin:0 0;-webkit-text-stroke:0.2px #262626;'>15</div>
<div style='position:absolute;left:99px;top:220px;width:173px;height:122px;background:#a7bee6;'></div>
<div style='position:absolute;left:99px;top:342px;width:173px;height:41px;background:#b3c6e8;'></div>
<div style='position:absolute;left:272px;top:220px;width:70px;height:122px;background:#b5b8da;'></div>
<div style='position:absolute;left:272px;top:342px;width:70px;height:41px;background:#b3c6e8;'></div>
<div style='position:absolute;left:99px;top:383px;width:173px;height:40px;background:#ed7d31;'></div>
<div style='position:absolute;left:272px;top:383px;width:70px;height:20px;background:#e47a45;'></div>
<div style='position:absolute;left:272px;top:403px;width:70px;height:20px;background:#d8813a;'></div>
<div style='position:absolute;left:99px;top:423px;width:173px;height:20px;background:#a9d08e;'></div>
<div style='position:absolute;left:272px;top:423px;width:209px;height:20px;background:#a9d08e;'></div>
<div style='position:absolute;left:99px;top:240px;width:243px;height:1.2px;background:#35425a;'></div>
<div style='position:absolute;left:99px;top:260px;width:243px;height:1.2px;background:#35425a;'></div>
<div style='position:absolute;left:99px;top:281px;width:243px;height:1.2px;background:#35425a;'></div>
<div style='position:absolute;left:99px;top:301px;width:243px;height:1.2px;background:#35425a;'></div>
<div style='position:absolute;left:99px;top:321px;width:243px;height:1.2px;background:#35425a;'></div>
<div style='position:absolute;left:99px;top:342px;width:243px;height:1.2px;background:#35425a;'></div>
<div style='position:absolute;left:99px;top:362px;width:243px;height:1.2px;background:#35425a;'></div>
<div style='position:absolute;left:99px;top:383px;width:243px;height:1.2px;background:#3a3a3a;'></div>
<div style='position:absolute;left:99px;top:403px;width:243px;height:1.2px;background:#3a3a3a;'></div>
<div style='position:absolute;left:99px;top:423px;width:243px;height:1.2px;background:#3a3a3a;'></div>
<div style='position:absolute;left:99px;top:443px;width:243px;height:1.2px;background:#3a3a3a;'></div>
<div style='position:absolute;left:99px;top:342px;width:1.2px;height:101px;background:#333;'></div>
<div style='position:absolute;left:272px;top:220px;width:1.2px;height:163px;background:#3a3a3a;'></div>
<div style='position:absolute;left:272px;top:383px;width:1.2px;height:20px;background:#e9c9d9;'></div>
<div style='position:absolute;left:272px;top:403px;width:1.2px;height:20px;background:#e6e2a6;'></div>
<div style='position:absolute;left:341.5px;top:220px;width:1.2px;height:203px;background:#3a3a3a;'></div>
<div style='position:absolute;left:99px;top:463.3px;width:243.5px;height:1.2px;background:#333;'></div>
<div style='position:absolute;left:99px;top:463.3px;width:1.2px;height:10px;background:#333;'></div>
<div style='position:absolute;left:272px;top:463.3px;width:1.2px;height:10px;background:#333;'></div>
<div style='position:absolute;left:341.8px;top:463.3px;width:1.2px;height:10px;background:#333;'></div>
<div style='position:absolute;left:98.6px;top:220px;width:1.8px;height:122px;background:#3d62a8;'></div>
<div style='position:absolute;left:271.3px;top:220px;width:1.2px;height:122px;background:#d77a80;'></div>
<div style='position:absolute;left:341.8px;top:220px;width:1.2px;height:122px;background:#d77a80;'></div>
<div style='position:absolute;left:272px;top:341.5px;width:70px;height:1.2px;background:#e0909a;'></div>
<div style='position:absolute;left:272px;top:382.2px;width:70px;height:1.4px;background:#9a88b8;'></div>
<div style='position:absolute;left:272px;top:402.2px;width:70px;height:1.4px;background:#3c3c28;'></div>
<div style='position:absolute;left:342px;top:383px;width:1px;height:20px;background:#9a88c0;'></div>
<div style='position:absolute;left:342px;top:403px;width:1px;height:20px;background:#5a9a5a;'></div>
<div style='position:absolute;left:270.5px;top:340.5px;width:2.6px;height:2.6px;background:#b04848;'></div>
<div style='position:absolute;left:340.5px;top:340.5px;width:2.6px;height:2.6px;background:#b04848;'></div>
<div style='position:absolute;left:98px;top:340.5px;width:2.6px;height:2.6px;background:#3d62a8;'></div>
<div style='position:absolute;left:340.8px;top:381.5px;width:2.6px;height:2.6px;background:#7060a0;'></div>
<div style='position:absolute;left:340.8px;top:401.5px;width:2.6px;height:2.6px;background:#2a7a40;'></div>
<div style='position:absolute;left:271px;top:381.5px;width:2.6px;height:2.6px;background:#7060a0;'></div>
<div style='position:absolute;left:271px;top:401.5px;width:2.6px;height:2.6px;background:#2a7a40;'></div>
<div style='position:absolute;left:272px;top:442.3px;width:70px;height:1.4px;background:#1e5e3a;'></div>
<div style='position:absolute;left:340.8px;top:442px;width:2.6px;height:2.6px;background:#1e5e3a;'></div>
<div style='position:absolute;left:243.01px;top:223.7px;white-space:pre;font-family:"Liberation Sans",sans-serif;font-size:14px;font-weight:400;font-style:normal;line-height:1;color:#111;transform:scaleX(0.9700);transform-origin:0 0;-webkit-text-stroke:0.2px #111;'>22.3</div>
<div style='position:absolute;left:243.01px;top:243.95px;white-space:pre;font-family:"Liberation Sans",sans-serif;font-size:14px;font-weight:400;font-style:normal;line-height:1;color:#111;transform:scaleX(0.9700);transform-origin:0 0;-webkit-text-stroke:0.2px #111;'>54.3</div>
<div style='position:absolute;left:243.01px;top:264.2px;white-space:pre;font-family:"Liberation Sans",sans-serif;font-size:14px;font-weight:400;font-style:normal;line-height:1;color:#111;transform:scaleX(0.9700);transform-origin:0 0;-webkit-text-stroke:0.2px #111;'>12.3</div>
<div style='position:absolute;left:243.01px;top:284.45px;white-space:pre;font-family:"Liberation Sans",sans-serif;font-size:14px;font-weight:400;font-style:normal;line-height:1;color:#111;transform:scaleX(0.9700);transform-origin:0 0;-webkit-text-stroke:0.2px #111;'>32.5</div>
<div style='position:absolute;left:243.01px;top:304.7px;white-space:pre;font-family:"Liberation Sans",sans-serif;font-size:14px;font-weight:400;font-style:normal;line-height:1;color:#111;transform:scaleX(0.9700);transform-origin:0 0;-webkit-text-stroke:0.2px #111;'>19.3</div>
<div style='position:absolute;left:243.01px;top:324.95px;white-space:pre;font-family:"Liberation Sans",sans-serif;font-size:14px;font-weight:400;font-style:normal;line-height:1;color:#111;transform:scaleX(0.9700);transform-origin:0 0;-webkit-text-stroke:0.2px #111;'>33.4</div>
<div style='position:absolute;left:243.01px;top:345.2px;white-space:pre;font-family:"Liberation Sans",sans-serif;font-size:14px;font-weight:400;font-style:normal;line-height:1;color:#111;transform:scaleX(0.9700);transform-origin:0 0;-webkit-text-stroke:0.2px #111;'>35.4</div>
<div style='position:absolute;left:243.01px;top:365.45px;white-space:pre;font-family:"Liberation Sans",sans-serif;font-size:14px;font-weight:400;font-style:normal;line-height:1;color:#111;transform:scaleX(0.9700);transform-origin:0 0;-webkit-text-stroke:0.2px #111;'>27.1</div>
<div style='position:absolute;left:324.75px;top:223.7px;white-space:pre;font-family:"Liberation Sans",sans-serif;font-size:14px;font-weight:400;font-style:normal;line-height:1;color:#111;transform:scaleX(0.9700);transform-origin:0 0;-webkit-text-stroke:0.2px #111;'>12</div>
<div style='position:absolute;left:324.75px;top:243.95px;white-space:pre;font-family:"Liberation Sans",sans-serif;font-size:14px;font-weight:400;font-style:normal;line-height:1;color:#111;transform:scaleX(0.9700);transform-origin:0 0;-webkit-text-stroke:0.2px #111;'>43</div>
<div style='position:absolute;left:324.75px;top:264.2px;white-space:pre;font-family:"Liberation Sans",sans-serif;font-size:14px;font-weight:400;font-style:normal;line-height:1;color:#111;transform:scaleX(0.9700);transform-origin:0 0;-webkit-text-stroke:0.2px #111;'>23</div>
<div style='position:absolute;left:313.11px;top:284.45px;white-space:pre;font-family:"Liberation Sans",sans-serif;font-size:14px;font-weight:400;font-style:normal;line-height:1;color:#111;transform:scaleX(0.9700);transform-origin:0 0;-webkit-text-stroke:0.2px #111;'>27.6</div>
<div style='position:absolute;left:313.11px;top:304.7px;white-space:pre;font-family:"Liberation Sans",sans-serif;font-size:14px;font-weight:400;font-style:normal;line-height:1;color:#111;transform:scaleX(0.9700);transform-origin:0 0;-webkit-text-stroke:0.2px #111;'>24.7</div>
<div style='position:absolute;left:313.11px;top:324.95px;white-space:pre;font-family:"Liberation Sans",sans-serif;font-size:14px;font-weight:400;font-style:normal;line-height:1;color:#111;transform:scaleX(0.9700);transform-origin:0 0;-webkit-text-stroke:0.2px #111;'>21.4</div>
<div style='position:absolute;left:332.40px;top:385.7px;white-space:pre;font-family:"Liberation Sans",sans-serif;font-size:14px;font-weight:400;font-style:normal;line-height:1;color:#111;-webkit-text-stroke:0.2px #111;'>3</div>
<div style='position:absolute;left:332.40px;top:405.95px;white-space:pre;font-family:"Liberation Sans",sans-serif;font-size:14px;font-weight:400;font-style:normal;line-height:1;color:#111;-webkit-text-stroke:0.2px #111;'>1</div>
<div style='position:absolute;left:102.80px;top:385.8px;white-space:pre;font-family:"Liberation Sans",sans-serif;font-size:14px;font-weight:400;font-style:normal;line-height:1;color:#111;transform:scaleX(0.9500);transform-origin:0 0;-webkit-text-stroke:0.2px #111;'>Tails</div>
<div style='position:absolute;left:102.80px;top:405.8px;white-space:pre;font-family:"Liberation Sans",sans-serif;font-size:14px;font-weight:400;font-style:normal;line-height:1;color:#111;transform:scaleX(0.9833);transform-origin:0 0;-webkit-text-stroke:0.2px #111;'>Type</div>
<div style='position:absolute;left:101.78px;top:426.2px;white-space:pre;font-family:"Liberation Sans",sans-serif;font-size:14px;font-weight:400;font-style:normal;line-height:1;color:#111;transform:scaleX(1.0221);transform-origin:0 0;-webkit-text-stroke:0.2px #111;'>Probability one tail</div>
<div style='position:absolute;left:274.07px;top:426.2px;white-space:pre;font-family:"Liberation Sans",sans-serif;font-size:14px;font-weight:400;font-style:normal;line-height:1;color:#111;transform:scaleX(0.9250);transform-origin:0 0;-webkit-text-stroke:0.2px #111;'><span style='color:#111'>=TTEST(</span><span style='color:#3c7dbd'>B3:B8</span><span style='color:#111'>,</span><span style='color:#b8503a'>C3:C8</span><span style='color:#111'>,</span><span style='color:#7a6aa8'>C11</span><span style='color:#111'>,</span><span style='color:#1f9a35'>C12</span><span style='color:#111'>)</span></div>
<div style='position:absolute;left:461px;top:426px;width:1px;height:15px;background:#222;'></div>
<div style='position:absolute;left:269.2px;top:421.7px;width:215.4px;height:37.2px;box-sizing:border-box;border:3px solid #cf2329'></div>
<div style='position:absolute;left:704px;top:200px;width:16px;height:273.5px;background:#f3f3f3;'></div>
<div style='position:absolute;left:704.5px;top:199.5px;width:15px;height:273px;border-radius:7px;background:#f8f8f8'></div>
<svg style='position:absolute;left:708.5px;top:203.8px;' width='8' height='6' viewBox='0 0 8 6'><path d='M4 0.5 L7.5 5.5 H0.5 Z' fill='#606060'/></svg>
<div style='position:absolute;left:709px;top:238.5px;width:7px;height:140.5px;border-radius:3.5px;background:#6e6e6e'></div>
<svg style='position:absolute;left:708.5px;top:464.8px;' width='8' height='6' viewBox='0 0 8 6'><path d='M4 5.5 L7.5 0.5 H0.5 Z' fill='#606060'/></svg>
<div style='position:absolute;left:3px;top:473.5px;width:717px;height:25px;background:#efefef;'></div>
<svg style='position:absolute;left:21px;top:482.5px;' width='5.5' height='7.5' viewBox='0 0 5.5 7.5'><path d='M4.8 0.6 L1 3.75 L4.8 6.9' fill='none' stroke='#333' stroke-width='1.1'/></svg>
<svg style='position:absolute;left:47.5px;top:482.5px;' width='5.5' height='7.5' viewBox='0 0 5.5 7.5'><path d='M0.7 0.6 L4.5 3.75 L0.7 6.9' fill='none' stroke='#a8a8a8' stroke-width='1.1'/></svg>
<div style='position:absolute;left:71.39999999999999px;top:485px;width:2px;height:2px;border-radius:50%;background:#333'></div>
<div style='position:absolute;left:74.6px;top:485px;width:2px;height:2px;border-radius:50%;background:#333'></div>
<div style='position:absolute;left:77.8px;top:485px;width:2px;height:2px;border-radius:50%;background:#333'></div>
<div style='position:absolute;left:99.36px;top:482px;white-space:pre;font-family:"Liberation Sans",sans-serif;font-size:11px;font-weight:400;font-style:normal;line-height:1;color:#262626;transform:scaleX(1.0385);transform-origin:0 0;-webkit-text-stroke:0.2px #262626;'>Sheet22</div>
<div style='position:absolute;left:151.5px;top:478px;width:1px;height:16px;background:#d6d6d6;'></div>
<div style='position:absolute;left:160.47px;top:482px;white-space:pre;font-family:"Liberation Sans",sans-serif;font-size:11px;font-weight:400;font-style:normal;line-height:1;color:#262626;transform:scaleX(1.0282);transform-origin:0 0;-webkit-text-stroke:0.2px #262626;'>Sheet11</div>
<div style='position:absolute;left:211px;top:478px;width:1px;height:16px;background:#d6d6d6;'></div>
<div style='position:absolute;left:219.96px;top:482px;white-space:pre;font-family:"Liberation Sans",sans-serif;font-size:11px;font-weight:400;font-style:normal;line-height:1;color:#262626;transform:scaleX(1.0385);transform-origin:0 0;-webkit-text-stroke:0.2px #262626;'>Sheet12</div>
<div style='position:absolute;left:275px;top:473px;width:91px;height:23px;background:#fff;border-radius:0 0 5px 5px;box-shadow:0 1px 1px rgba(0,0,0,0.10)'></div>
<div style='position:absolute;left:282.00px;top:478.3px;white-space:pre;font-family:"Liberation Sans",sans-serif;font-size:12px;font-weight:700;font-style:normal;line-height:1;color:#1f1f1f;transform:scaleX(0.8807);transform-origin:0 0;'>TTEST function</div>
<div style='position:absolute;left:282px;top:492.2px;width:78px;height:1.8px;background:#1b7a45;'></div>
<div style='position:absolute;left:370px;top:478px;width:1px;height:15px;background:#dadada;'></div>
<svg style='position:absolute;left:405px;top:481px;' width='9.5' height='9' viewBox='0 0 9.5 9'><path d='M4.75 0 V9 M0 4.5 H9.5' stroke='#333' stroke-width='1.1'/></svg>
<div style='position:absolute;left:435px;top:482px;width:2px;height:2px;border-radius:50%;background:#333'></div>
<div style='position:absolute;left:435px;top:485.5px;width:2px;height:2px;border-radius:50%;background:#333'></div>
<div style='position:absolute;left:435px;top:489px;width:2px;height:2px;border-radius:50%;background:#333'></div>
<div style='position:absolute;left:448px;top:478px;width:256.5px;height:14.5px;border-radius:7px;background:#f7f7f7'></div>
<svg style='position:absolute;left:453px;top:482px;' width='6.5' height='8' viewBox='0 0 6.5 8'><path d='M0.5 4 L6 0.5 V7.5 Z' fill='#5a5a5a'/></svg>
<div style='position:absolute;left:463.5px;top:482.7px;width:206.5px;height:6px;border-radius:3px;background:#6e6e6e'></div>
<svg style='position:absolute;left:695px;top:482px;' width='6.5' height='8' viewBox='0 0 6.5 8'><path d='M6 4 L0.5 0.5 V7.5 Z' fill='#5a5a5a'/></svg>
<div style='position:absolute;left:3px;top:498.5px;width:717px;height:18.5px;background:#f3f3f3;'></div>
<div style='position:absolute;left:10.07px;top:505.20000000000005px;white-space:pre;font-family:"Liberation Sans",sans-serif;font-size:9px;font-weight:400;font-style:normal;line-height:1;color:#555;transform:scaleX(0.9333);transform-origin:0 0;-webkit-text-stroke:0.2px #555;'>Edit</div>
<svg style='position:absolute;left:49.8px;top:504px;' width='11.5' height='10' viewBox='0 0 11.5 10'><rect x='0.5' y='0.5' width='10.5' height='9' fill='none' stroke='#444' stroke-width='1'/><rect x='0.5' y='0.5' width='10.5' height='2' fill='#444'/><circle cx='7.3' cy='6.6' r='2.6' fill='#f3f3f3' stroke='#444' stroke-width='1'/><circle cx='7.3' cy='6.6' r='1.1' fill='#222'/></svg>
<svg style='position:absolute;left:75.3px;top:503px;' width='12' height='12' viewBox='0 0 12 12'><circle cx='5' cy='1.8' r='1.4' fill='none' stroke='#333' stroke-width='0.9'/><path d='M0.6 3.6 C2.5 4.6 7.5 4.6 9.6 3.6 M5 4.5 V7 C5 9 3.5 10.5 2.5 11.5' fill='none' stroke='#333' stroke-width='0.9'/><path d='M6.5 8 L11 11.5 M11 8 L6.5 11.5' stroke='#333' stroke-width='0.9'/></svg>
<div style='position:absolute;left:90.30px;top:505px;white-space:pre;font-family:"Liberation Sans",sans-serif;font-size:9px;font-weight:700;font-style:normal;line-height:1;color:#262626;transform:scaleX(0.9598);transform-origin:0 0;'>Accessibility: Investigate</div>
<svg style='position:absolute;left:477.5px;top:503px;' width='11' height='11' viewBox='0 0 11 11'><path d='M0.5 0.5 H10.5 V10.5 H0.5 Z M0.5 3.8 H10.5 M0.5 7.2 H10.5 M3.8 0.5 V10.5 M7.2 0.5 V10.5' fill='none' stroke='#b5b5b5' stroke-width='0.9'/></svg>
<svg style='position:absolute;left:510px;top:503px;' width='12' height='11' viewBox='0 0 12 11'><rect x='0.5' y='0.5' width='11' height='10' fill='none' stroke='#b5b5b5' stroke-width='0.9'/><rect x='3' y='2.5' width='6' height='6' fill='none' stroke='#b5b5b5' stroke-width='0.9'/><path d='M4.5 4.5 H7.5 M4.5 6.5 H7.5' stroke='#c5c5c5' stroke-width='0.7'/></svg>
<svg style='position:absolute;left:543px;top:503px;' width='12' height='11' viewBox='0 0 12 11'><rect x='0.5' y='0.5' width='11' height='10' fill='none' stroke='#b5b5b5' stroke-width='0.9'/><path d='M3.5 0.5 V5.5 H8.5 V0.5' fill='none' stroke='#b5b5b5' stroke-width='0.9'/></svg>
<div style='position:absolute;left:570px;top:508.5px;width:6.5px;height:1px;background:#b5b5b5;'></div>
<div style='position:absolute;left:580.7px;top:508px;width:82px;height:1.2px;background:#8a8a8a;'></div>
<div style='position:absolute;left:621px;top:505.5px;width:1.2px;height:5.5px;background:#8a8a8a;'></div>
<svg style='position:absolute;left:666.5px;top:505px;' width='7' height='7' viewBox='0 0 7 7'><path d='M3.5 0 V7 M0 3.5 H7' stroke='#b5b5b5' stroke-width='0.9'/></svg>
<div style='position:absolute;left:683.05px;top:505px;white-space:pre;font-family:"Liberation Sans",sans-serif;font-size:9px;font-weight:400;font-style:normal;line-height:1;color:#a6a6a6;transform:scaleX(0.9545);transform-origin:0 0;-webkit-text-stroke:0.1px #a6a6a6;'>100%</div>
</body></html>
